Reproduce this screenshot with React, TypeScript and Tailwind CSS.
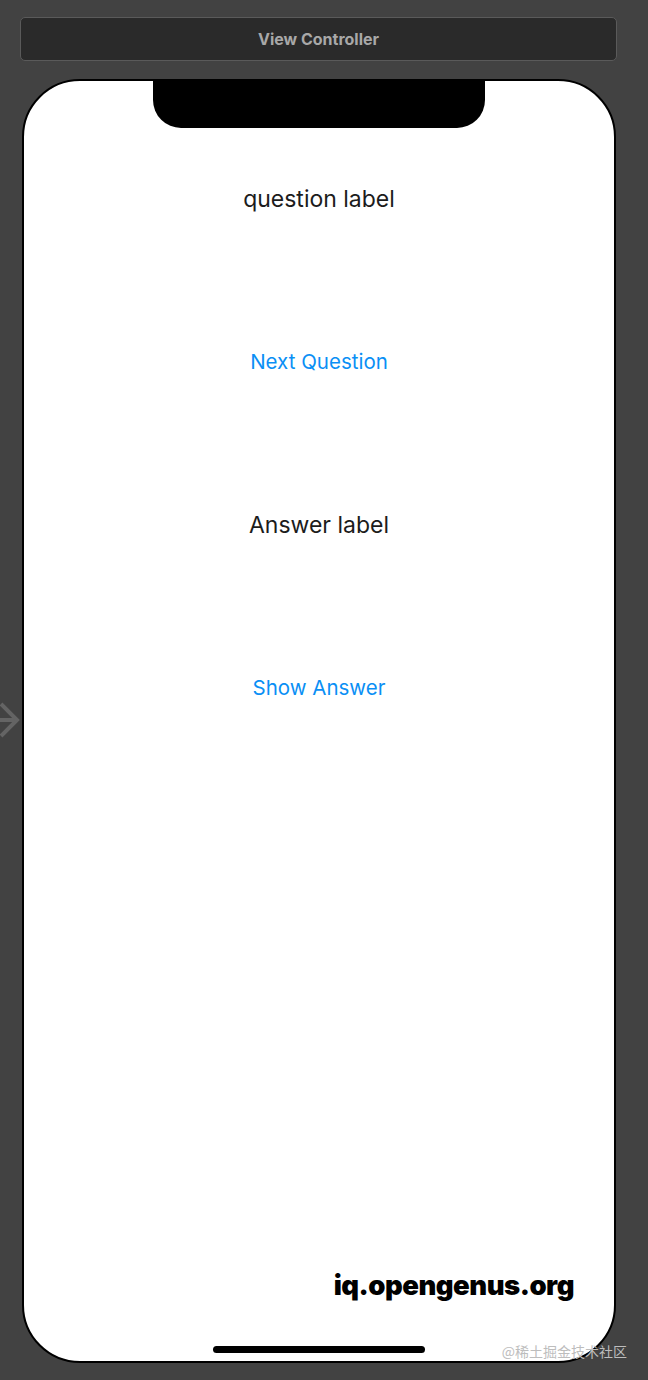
import React from 'react';

const FONT = { fontFamily: 'Inter, "Noto Sans", sans-serif' };

// storyboard entry point arrow, clipped by the left edge
const EntryArrow: React.FC = () => (
  <svg
    className="absolute left-0 top-[701px]"
    width="22"
    height="38"
    viewBox="0 0 22 38"
  >
    <path d="M-10 19 H17" stroke="#646464" strokeWidth="4" fill="none" />
    <path d="M1 3 L17 19 L1 35" stroke="#646464" strokeWidth="4" fill="none" />
  </svg>
);

const Label: React.FC<{ text: string; link?: boolean }> = ({ text, link }) => (
  <div
    className={`h-[40px] flex items-center ${
      link ? 'text-[20.5px] text-[#0a8ff5]' : 'text-[23px] text-[#1c1c1c]'
    }`}
  >
    {text}
  </div>
);

export default function App() {
  return (
    <div className="relative w-[648px] h-[1380px] bg-[#424242] overflow-hidden" style={FONT}>
      <EntryArrow />

      <div className="flex flex-col px-[20px] pt-[17px] gap-[18px]">
        {/* scene title bar */}
        <div className="w-[597px] h-[44px] flex items-center justify-center rounded-[5px] border border-[#5a5a5a] bg-[#2a2a2a]">
          <span className="text-[16px] font-bold text-[#a8a8a8]">View Controller</span>
        </div>

        {/* device frame */}
        <div className="relative ml-[2px] w-[594px] h-[1284px] rounded-[58px] border-2 border-black bg-white overflow-hidden">
          <div className="absolute left-1/2 -translate-x-1/2 -top-[2px] w-[332px] h-[49px] bg-black rounded-b-[28px]" />

          <div className="flex flex-col items-center pt-[98px] gap-[123px]">
            <Label text="question label" />
            <Label text="Next Question" link />
            <Label text="Answer label" />
            <Label text="Show Answer" link />
          </div>

          <div className="absolute right-[40px] bottom-[55px] text-[27.5px] font-black tracking-[-0.5px] text-black">
            iq.opengenus.org
          </div>
          <div className="absolute left-1/2 -translate-x-1/2 bottom-[8px] w-[212px] h-[7px] rounded-full bg-black" />
        </div>
      </div>

      <div
        className="absolute right-[21px] top-[1341px] text-[14px] text-[#bdbdbd]"
        style={{ fontFamily: '"Noto Sans CJK SC", sans-serif' }}
      >
        @稀土掘金技术社区
      </div>
    </div>
  );
}
